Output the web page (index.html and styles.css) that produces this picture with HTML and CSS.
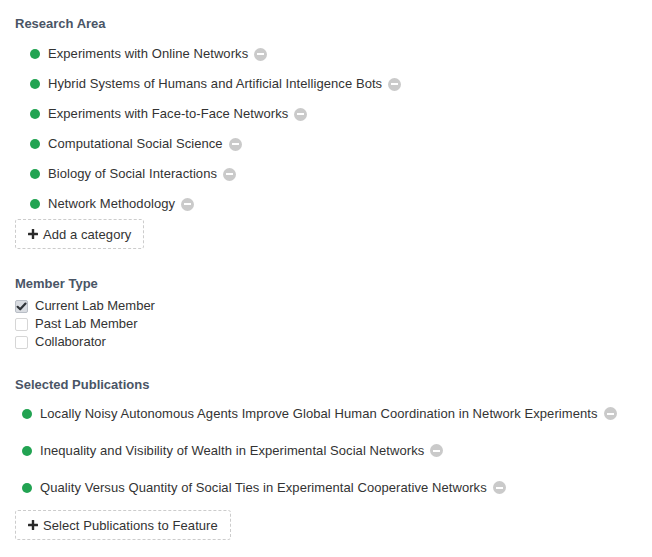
FILE: index.html
```html
<!DOCTYPE html>
<html>
<head>
<meta charset="utf-8">
<link rel="stylesheet" href="styles.css">
</head>
<body>
<div class="page">
  <section class="section">
    <h3 class="heading">Research Area</h3>
    <ul class="tags">
      <li class="tag"><span class="dot"></span><span class="label">Experiments with Online Networks</span><span class="remove"></span></li>
      <li class="tag"><span class="dot"></span><span class="label">Hybrid Systems of Humans and Artificial Intelligence Bots</span><span class="remove"></span></li>
      <li class="tag"><span class="dot"></span><span class="label">Experiments with Face-to-Face Networks</span><span class="remove"></span></li>
      <li class="tag"><span class="dot"></span><span class="label">Computational Social Science</span><span class="remove"></span></li>
      <li class="tag"><span class="dot"></span><span class="label">Biology of Social Interactions</span><span class="remove"></span></li>
      <li class="tag"><span class="dot"></span><span class="label">Network Methodology</span><span class="remove"></span></li>
    </ul>
    <button class="add-btn"><svg class="plus" viewBox="0 0 10 10" width="10" height="10"><rect x="3.8" y="0" width="2.4" height="10" rx="0.5"/><rect x="0" y="3.8" width="10" height="2.4" rx="0.5"/></svg><span>Add a category</span></button>
  </section>

  <section class="section section-members">
    <h3 class="heading">Member Type</h3>
    <div class="checks">
      <label class="check"><span class="box checked"><svg viewBox="0 0 13 13" width="13" height="13"><path d="M2.6 6.8 L5.2 9.3 L10.5 3.6" fill="none" stroke="#2f3338" stroke-width="2.2" stroke-linecap="round" stroke-linejoin="round"/></svg></span><span>Current Lab Member</span></label>
      <label class="check"><span class="box"></span><span>Past Lab Member</span></label>
      <label class="check"><span class="box"></span><span>Collaborator</span></label>
    </div>
  </section>

  <section class="section section-pubs">
    <h3 class="heading">Selected Publications</h3>
    <ul class="pubs">
      <li class="pub"><span class="dot"></span><span class="label">Locally Noisy Autonomous Agents Improve Global Human Coordination in Network Experiments</span><span class="remove"></span></li>
      <li class="pub"><span class="dot"></span><span class="label">Inequality and Visibility of Wealth in Experimental Social Networks</span><span class="remove"></span></li>
      <li class="pub"><span class="dot"></span><span class="label">Quality Versus Quantity of Social Ties in Experimental Cooperative Networks</span><span class="remove"></span></li>
    </ul>
    <button class="add-btn add-btn-pubs"><svg class="plus" viewBox="0 0 10 10" width="10" height="10"><rect x="3.8" y="0" width="2.4" height="10" rx="0.5"/><rect x="0" y="3.8" width="10" height="2.4" rx="0.5"/></svg><span>Select Publications to Feature</span></button>
  </section>
</div>
</body>
</html>
```

FILE: styles.css
```css
html, body {
  margin: 0;
  padding: 0;
  background: #ffffff;
}

body {
  font-family: "Liberation Sans", Arial, Helvetica, sans-serif;
  font-size: 13px;
  color: #333333;
}

.page {
  padding: 15px 15px 0 15px;
}

.section-members {
  margin-top: 26px;
}

.section-pubs {
  margin-top: 25px;
}

.heading {
  margin: 0;
  font-size: 13px;
  line-height: 18px;
  font-weight: bold;
  color: #4a5566;
}

.tags,
.pubs {
  list-style: none;
  margin: 0;
  padding: 0;
}

.tags {
  margin-top: 6px;
  padding-left: 15px;
}

.tag,
.pub {
  display: flex;
  align-items: center;
  line-height: 18px;
}

.tag {
  height: 30px;
}

.pubs {
  margin-top: 1px;
  padding-left: 7px;
}

.pub {
  height: 37px;
}

.dot {
  width: 10px;
  height: 10px;
  border-radius: 50%;
  background: #22a352;
  flex: none;
  margin-right: 8px;
}

.label {
  white-space: nowrap;
  letter-spacing: 0.07px;
}

.remove {
  position: relative;
  flex: none;
  width: 13px;
  height: 13px;
  border-radius: 50%;
  background: #cacaca;
  margin-left: 6px;
}

.remove::after {
  content: "";
  position: absolute;
  left: 3px;
  top: 5.5px;
  width: 7px;
  height: 2px;
  background: #ffffff;
}

.add-btn {
  display: flex;
  align-items: center;
  height: 30px;
  box-sizing: border-box;
  padding: 0 12px;
  margin: 0;
  border: 1px dashed #cccccc;
  border-radius: 3px;
  background: #ffffff;
  font-family: inherit;
  font-size: 13px;
  letter-spacing: 0.07px;
  color: #333333;
  cursor: pointer;
}

.add-btn-pubs {
  margin-top: 4px;
}

.plus {
  fill: #2a2a2a;
  margin-right: 5px;
  flex: none;
}

.checks {
  margin-top: 4px;
  display: flex;
  flex-direction: column;
}

.check {
  display: flex;
  align-items: center;
  height: 18px;
  line-height: 18px;
}

.box {
  width: 13px;
  height: 13px;
  box-sizing: border-box;
  border: 1px solid #d6d6d6;
  border-radius: 2px;
  margin-right: 7px;
  flex: none;
  position: relative;
  background: #ffffff;
}

.box.checked {
  background: #d9dce1;
  border-color: #b9bec6;
}

.box svg {
  position: absolute;
  left: -1px;
  top: -1px;
}
```
